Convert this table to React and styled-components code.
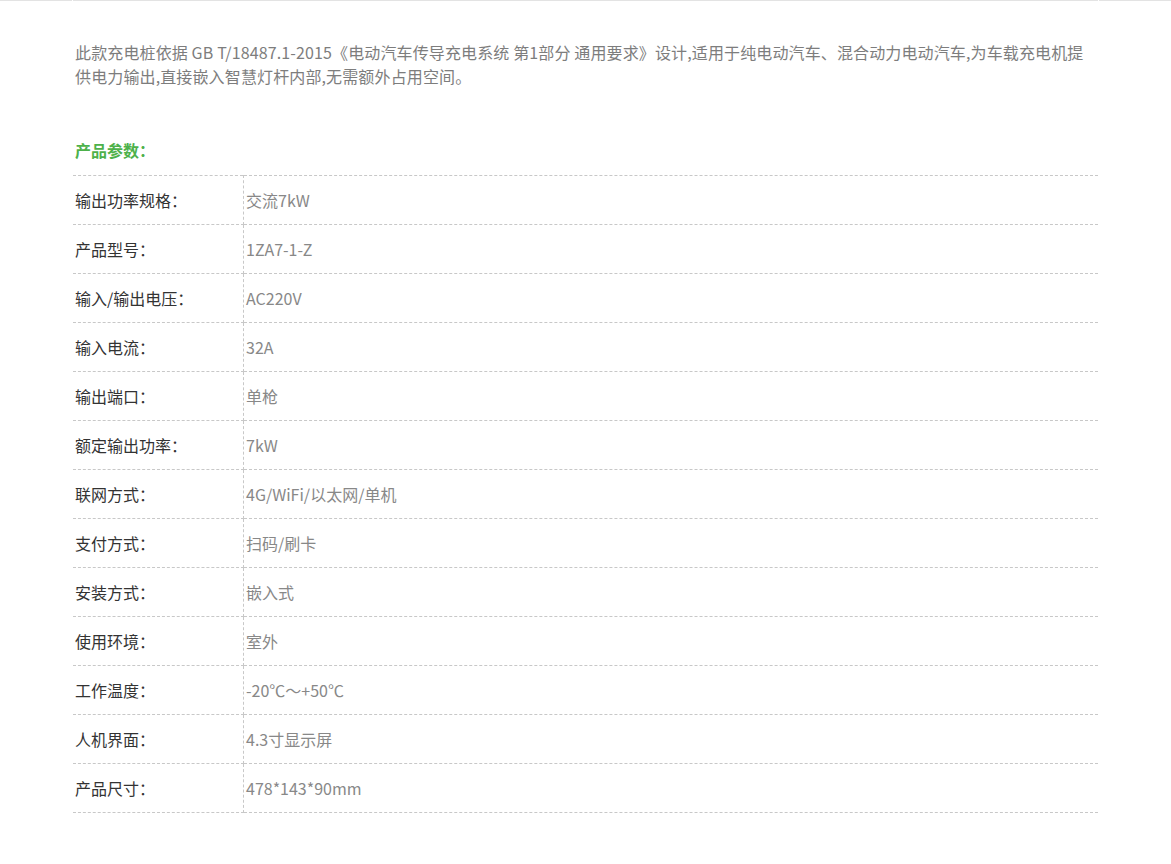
import React from 'react';
import styled, { createGlobalStyle } from 'styled-components';

const GlobalStyle = createGlobalStyle`
  html, body {
    margin: 0;
    padding: 0;
    background: #fff;
  }
  body {
    font-family: "Noto Sans CJK SC", "Microsoft YaHei", sans-serif;
  }
`;

const TopRule = styled.div`
  display: grid;
  grid-template-columns: 72px 1fr 72px;
  column-gap: 1px;
  width: 1171px;
  & span {
    height: 1px;
    background: #e3e3e3;
  }
`;

const Content = styled.div`
  width: 1025px;
  margin-left: 73px;
  padding-top: 39px;
  padding-bottom: 52px;
`;

const Intro = styled.p`
  margin: 0;
  padding: 0 12px 0 2px;
  font-size: 16px;
  line-height: 24px;
  letter-spacing: 0.13px;
  color: #7d7d7d;
`;

const Heading = styled.h3`
  margin: 50px 0 0;
  padding: 0 2px;
  font-size: 16px;
  line-height: 24px;
  font-weight: bold;
  color: #4db14a;
  height: 37px;
`;

const Table = styled.table`
  width: 100%;
  border-collapse: collapse;
  border-top: 1px dashed #c8c8c8;
  & td {
    height: 48px;
    padding: 0;
    font-size: 16px;
    border-bottom: 1px dashed #c8c8c8;
    vertical-align: middle;
  }
`;

const Label = styled.td`
  width: 168px;
  padding-left: 2px !important;
  color: #333;
  border-right: 1px dashed #c8c8c8;
`;

const Value = styled.td`
  padding-left: 2px !important;
  color: #888;
`;

const specs = [
  ['输出功率规格：', '交流7kW'],
  ['产品型号：', '1ZA7-1-Z'],
  ['输入/输出电压：', 'AC220V'],
  ['输入电流：', '32A'],
  ['输出端口：', '单枪'],
  ['额定输出功率：', '7kW'],
  ['联网方式：', '4G/WiFi/以太网/单机'],
  ['支付方式：', '扫码/刷卡'],
  ['安装方式：', '嵌入式'],
  ['使用环境：', '室外'],
  ['工作温度：', '-20℃～+50℃'],
  ['人机界面：', '4.3寸显示屏'],
  ['产品尺寸：', '478*143*90mm'],
];

const App = () => {
  return (
    <>
      <GlobalStyle />
      <TopRule>
        <span />
        <span />
        <span />
      </TopRule>
      <Content>
        <Intro>
          此款充电桩依据 GB T/18487.1-2015《电动汽车传导充电系统 第1部分 通用要求》设计,适用于纯电动汽车、混合动力电动汽车,为车载充电机提供电力输出,直接嵌入智慧灯杆内部,无需额外占用空间。
        </Intro>
        <Heading>产品参数：</Heading>
        <Table>
          <tbody>
            {specs.map(([label, value]) => (
              <tr key={label}>
                <Label>{label}</Label>
                <Value>{value}</Value>
              </tr>
            ))}
          </tbody>
        </Table>
      </Content>
    </>
  );
};

export default App;
